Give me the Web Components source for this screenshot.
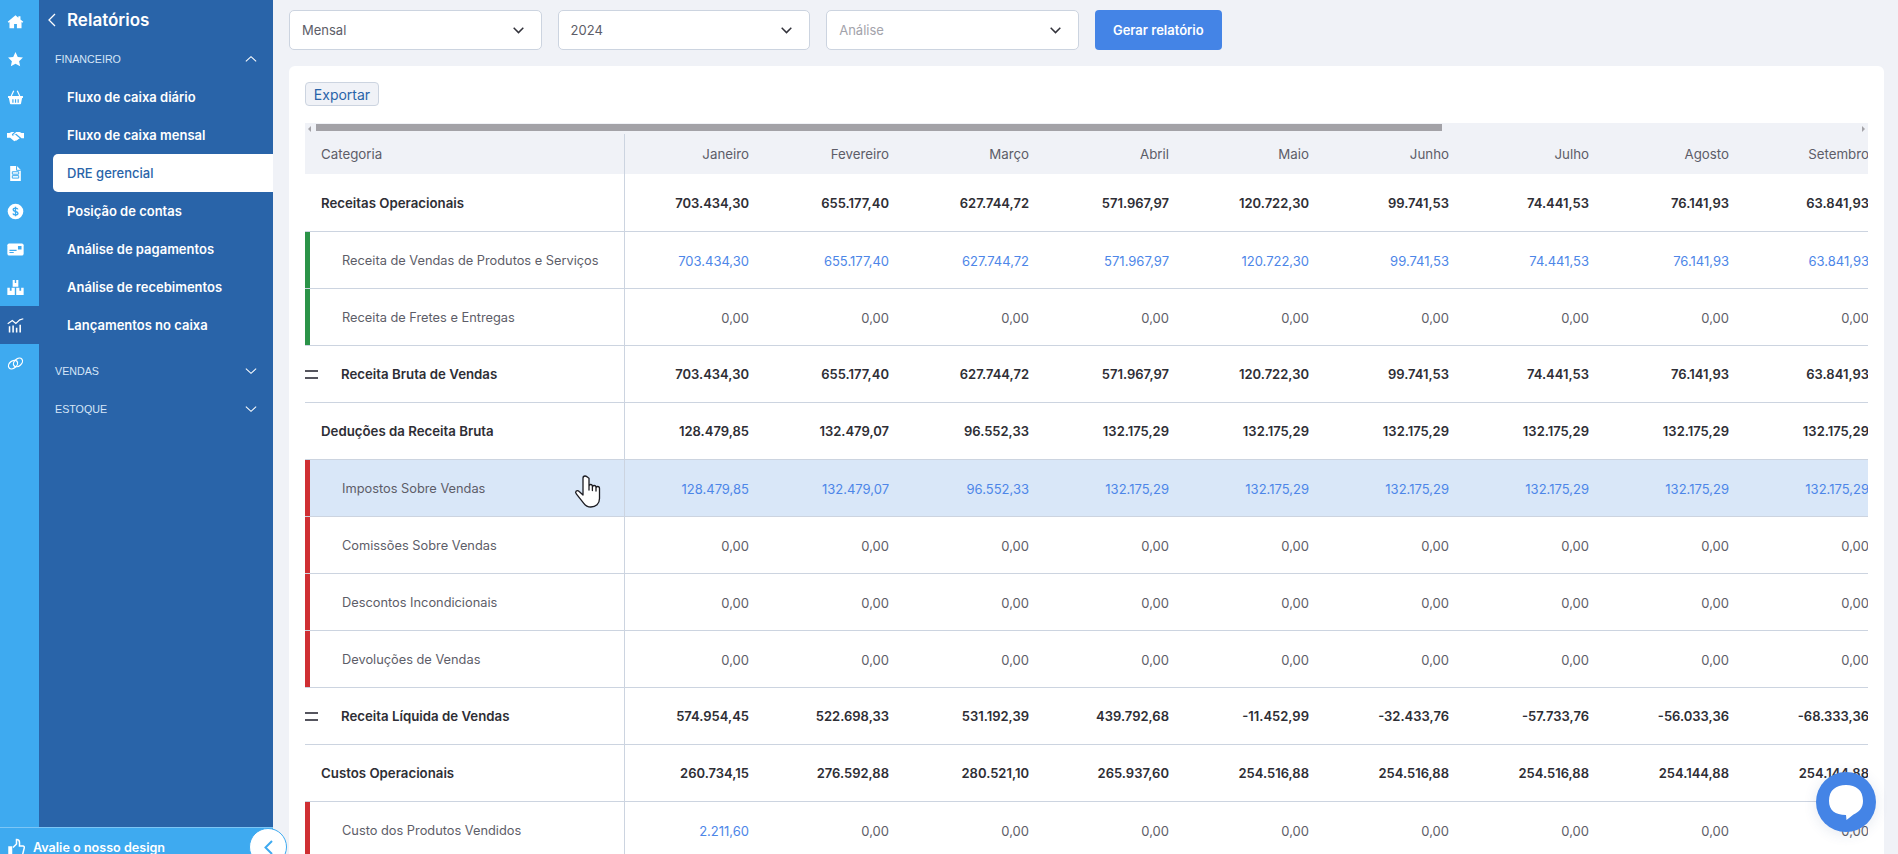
<!DOCTYPE html>
<html lang="pt-BR">
<head>
<meta charset="utf-8">
<title>DRE gerencial</title>
<style>
  html, body { margin: 0; height: 100%; overflow: hidden; }
  body { display: flex; height: 854px; background: #f0f2f7; font-family: Inter, "Liberation Sans", sans-serif; }
</style>
</head>
<body>
<nav-panel></nav-panel>
<main-area></main-area>
<hand-cursor></hand-cursor>
<chat-button></chat-button>

<script>
const ICONS = {
  home: '<path d="M12 3 1 12.400l1.300 1.400L3.500 12.800V21.500H10V15.500h4v6h6.500V12.800l1.200 1 1.300-1.400L19 9.200V4.500h-3v2.200z"/>',
  star: '<path d="m12 1.500 3.200 6.800 7.300.9-5.400 5.100 1.500 7.400L12 18.100l-6.600 3.600 1.500-7.400-5.400-5.100 7.300-.9z"/>',
  basket: '<path d="M1.500 10h21v2.800h-1.200l-1.500 7.800c-.1.600-.6 1-1.200 1H5.400c-.6 0-1.100-.4-1.200-1L2.700 12.800H1.500z"/><path d="m6 10 3.500-7.500M18 10l-3.500-7.500" stroke="#fff" stroke-width="1.700" fill="none"/><path d="M7.500 14.500h1.700v5H7.500zm3.700 0h1.700v5h-1.700zm3.700 0h1.700v5h-1.700z" fill="#3eaaf0"/>',
  hands: '<path d="M0 8.500h3.500l3-1.500h4l-3.300 3c-.9 1 .3 2.800 1.800 2l2.500-1.500 6.300 5.500-1 1.300-1.200-.3-.3 1.300-1.300-.3-.5 1.300-1.500-.2-1 .9-2-1-4.500-3.800H0z"/><path d="M24 8.500h-3.500l-2.500-1.500h-5l-4 3.700c-.3.700.5 1 1 .7l3-1.900 7.500 6.500H24z"/>',
  doc: '<path d="M4.500 1.500H14l5.500 5.500v15.500h-15z"/><path d="M7.500 9.500h9V13h-9zm0 5.500h9v3.500h-9zM13.500 1.500v6h6" fill="none" stroke="#3eaaf0" stroke-width="1.400"/>',
  money: '<circle cx="12" cy="12" r="11"/><path d="M15.500 9c-.5-1.300-1.800-1.800-3.500-1.800-2 0-3.300 1-3.300 2.400 0 3.400 6.800 1.500 6.800 4.800 0 1.400-1.400 2.400-3.500 2.400-1.800 0-3.200-.6-3.700-2M12 5.200v13.600" fill="none" stroke="#3eaaf0" stroke-width="1.900"/>',
  card: '<rect x="0.500" y="3.500" width="23" height="17" rx="2.500"/><path d="M3.500 12.500h10v1.600h-10zm0 3h6v1.600h-6zm12-8.500h5v5h-5z" fill="#3eaaf0"/>',
  boxes: '<path d="M8 1.500h3v4h2v-4h3v9.500H8zM.500 12.500h3.500v4h2.500v-4H11v10H.500zm12.500 0h4.500v4h2.500v-4h3.500v10H13z"/>',
  chart: '<path d="M2.500 13h2.200v9H2.500zm5-1h2.200v10H7.500zm5 3h2.200v7h-2.200zm5-4h2.200v11h-2.200z"/><path d="m1 9.500 6.500-4.500 5 4 5.500-5 5-1.500" fill="none" stroke="#fff" stroke-width="1.700"/>',
  link: '<g fill="none" stroke="#fff" stroke-width="1.800"><ellipse cx="8.500" cy="13.500" rx="7.200" ry="5" transform="rotate(-40 8.500 13.500)"/><ellipse cx="15.500" cy="10.500" rx="7.200" ry="5" transform="rotate(-40 15.500 10.500)"/></g>'
};

class RailButton extends HTMLElement {
  connectedCallback() {
    const name = this.getAttribute('icon');
    this.attachShadow({ mode: 'open' }).innerHTML = `
      <style>
        :host { display: flex; height: 38px; align-items: center; justify-content: center; padding-right: 9px; }
        :host([active]) { background: #2964a9; }
        svg { width: 17px; height: 17px; fill: #fff; display: block; }
      </style>
      <svg viewBox="0 0 24 24">${ICONS[name]}</svg>
    `;
  }
}
customElements.define('rail-button', RailButton);

class MenuGroup extends HTMLElement {
  connectedCallback() {
    const open = this.hasAttribute('open');
    const arrow = open ? 'M1 7l6-5.500L13 7' : 'M1 1.500 7 7l6-5.500';
    this.attachShadow({ mode: 'open' }).innerHTML = `
      <style>
        :host { display: block; margin-bottom: 8px; }
        :host([open]) { margin-bottom: 8px; }
        .title { display: flex; align-items: center; justify-content: space-between; height: 38px; padding: 0 16px;
          font: 10.700px "Liberation Sans", Arial, sans-serif; color: #d6e6f8; }
        svg { width: 12px; height: 8px; fill: none; stroke: #fff; stroke-width: 1.200; }
      </style>
      <div class="title"><span>${this.getAttribute('label')}</span><svg viewBox="0 0 14 8.500"><path d="${arrow}"/></svg></div>
      <slot></slot>
    `;
  }
}
customElements.define('menu-group', MenuGroup);

class MenuItem extends HTMLElement {
  connectedCallback() {
    this.attachShadow({ mode: 'open' }).innerHTML = `
      <style>
        :host { display: flex; align-items: center; height: 38px; margin-left: 14px; padding-left: 14px;
          font: 600 13px Inter, sans-serif; color: #fff; border-radius: 5px 0 0 5px; }
        :host([active]) { background: #fff; color: #2964a9; font-weight: 500; }
      </style>
      <slot></slot>
    `;
  }
}
customElements.define('menu-item', MenuItem);

class NavPanel extends HTMLElement {
  connectedCallback() {
    const rail = Object.keys(ICONS).map(n => `<rail-button icon="${n}"${n === 'chart' ? ' active' : ''}></rail-button>`).join('');
    this.attachShadow({ mode: 'open' }).innerHTML = `
      <style>
        :host { display: flex; flex-direction: column; flex: none; width: 273px; height: 854px; position: relative; z-index: 2; }
        .top { display: flex; flex: none; height: 827px; }
        .rail { width: 39px; flex: none; background: #3eaaf0; padding-top: 2px; box-sizing: border-box; }
        .menu { flex: 1; background: #2964a9; padding-top: 2px; }
        .back { display: flex; align-items: center; height: 36px; gap: 11px; padding-left: 9px;
          font: 600 17px Inter, sans-serif; color: #fff; }
        .back svg { width: 8px; height: 14px; fill: none; stroke: #fff; stroke-width: 1.300; }
        .groups { padding-top: 2px; }
        .bottom { height: 27px; overflow: hidden; box-sizing: border-box; border-top: 1px solid #7cc6f6; background: #3eaaf0; display: flex;
          gap: 8px; padding: 10px 0 0 8px; font: 600 12.600px Inter, sans-serif; color: #fff; }
        .bottom svg { width: 17px; height: 20px; fill: none; stroke: #fff; stroke-width: 1.500; flex: none; }
        .bottom span { line-height: 20px; }
        .fold { position: absolute; left: 249px; top: 828px; width: 38px; height: 38px; box-sizing: border-box; border-radius: 50%; background: #fff;
          border: 1.500px solid #3eaaf0; display: flex; align-items: center; justify-content: center; }
        .fold svg { width: 9px; height: 15px; fill: none; stroke: #3eaaf0; stroke-width: 2; }
      </style>
      <div class="top">
        <div class="rail">${rail}</div>
        <div class="menu">
          <div class="back"><svg viewBox="0 0 8 14"><path d="M7 1 1 7l6 6"/></svg>Relatórios</div>
          <div class="groups">
            <menu-group label="FINANCEIRO" open>
              <menu-item>Fluxo de caixa diário</menu-item>
              <menu-item>Fluxo de caixa mensal</menu-item>
              <menu-item active>DRE gerencial</menu-item>
              <menu-item>Posição de contas</menu-item>
              <menu-item>Análise de pagamentos</menu-item>
              <menu-item>Análise de recebimentos</menu-item>
              <menu-item>Lançamentos no caixa</menu-item>
            </menu-group>
            <menu-group label="VENDAS" style="margin-bottom:0"></menu-group>
            <menu-group label="ESTOQUE"></menu-group>
          </div>
        </div>
      </div>
      <div class="bottom">
        <svg viewBox="0 0 17 20"><path d="M1 9h2.500v10H1z" fill="#fff"/><path d="M5 9.500 8.500 6V1.500c1.800 0 3 1 3 3V8H15c1 0 1.500 1 1.300 1.800L14.500 17c-.2.800-.8 1.200-1.500 1.200H7.500L5 17"/></svg>
        <span>Avalie o nosso design</span>
      </div>
      <div class="fold"><svg viewBox="0 0 9 15"><path d="M8 1 1.500 7.500 8 14"/></svg></div>
    `;
  }
}
customElements.define('nav-panel', NavPanel);

class FilterSelect extends HTMLElement {
  connectedCallback() {
    this.attachShadow({ mode: 'open' }).innerHTML = `
      <style>
        :host { display: flex; align-items: center; justify-content: space-between; width: 252.600px; height: 40px; box-sizing: border-box;
          padding: 0 17px 0 12px; background: #fff; border: 1px solid #ccd4e0; border-radius: 5px;
          font: 13px Inter, sans-serif; color: #5d5d68; }
        :host([placeholder]) { color: #a3a3ab; }
        svg { width: 11px; height: 7px; fill: none; stroke: #33333b; stroke-width: 1.500; }
      </style>
      <slot></slot>
      <svg viewBox="0 0 11 7"><path d="m.7.8 4.800 4.800L10.300.8"/></svg>
    `;
  }
}
customElements.define('filter-select', FilterSelect);

const MONTHS = ['Janeiro', 'Fevereiro', 'Março', 'Abril', 'Maio', 'Junho', 'Julho', 'Agosto', 'Setembro'];
const ZEROS = Array(9).fill('0,00');
const RECEITA = ['703.434,30', '655.177,40', '627.744,72', '571.967,97', '120.722,30', '99.741,53', '74.441,53', '76.141,93', '63.841,93'];
const DEDUCOES = ['128.479,85', '132.479,07', '96.552,33', '132.175,29', '132.175,29', '132.175,29', '132.175,29', '132.175,29', '132.175,29'];
const ROWS = [
  { label: 'Receitas Operacionais', kind: 'group', values: RECEITA },
  { label: 'Receita de Vendas de Produtos e Serviços', bar: 'green', values: RECEITA, link: true },
  { label: 'Receita de Fretes e Entregas', bar: 'green', values: ZEROS },
  { label: 'Receita Bruta de Vendas', kind: 'total', values: RECEITA },
  { label: 'Deduções da Receita Bruta', kind: 'group', values: DEDUCOES },
  { label: 'Impostos Sobre Vendas', bar: 'red', values: DEDUCOES, link: true, hover: true },
  { label: 'Comissões Sobre Vendas', bar: 'red', values: ZEROS },
  { label: 'Descontos Incondicionais', bar: 'red', values: ZEROS },
  { label: 'Devoluções de Vendas', bar: 'red', values: ZEROS },
  { label: 'Receita Líquida de Vendas', kind: 'total', values: ['574.954,45', '522.698,33', '531.192,39', '439.792,68', '-11.452,99', '-32.433,76', '-57.733,76', '-56.033,36', '-68.333,36'] },
  { label: 'Custos Operacionais', kind: 'group', values: ['260.734,15', '276.592,88', '280.521,10', '265.937,60', '254.516,88', '254.516,88', '254.516,88', '254.144,88', '254.144,88'] },
  { label: 'Custo dos Produtos Vendidos', bar: 'red', values: ['2.211,60', ...ZEROS.slice(1)], firstLink: true }
];

class ReportTable extends HTMLElement {
  connectedCallback() {
    const head = MONTHS.map(m => `<div class="num">${m}</div>`).join('');
    const body = ROWS.map(r => {
      const cls = ['row', r.kind === 'group' || r.kind === 'total' ? 'strong' : 'sub', r.hover ? 'hover' : ''].join(' ');
      const cat = r.kind === 'total' ? 'total' : r.bar ? 'bar ' + r.bar : 'plain';
      const eq = r.kind === 'total' ? '<i class="eq"></i>' : '';
      const nums = r.values.map((v, i) => `<div class="num${r.link || (r.firstLink && i === 0) ? ' link' : ''}">${v}</div>`).join('');
      return `<div class="${cls}"><div class="cat ${cat}">${eq}<span>${r.label}</span></div>${nums}</div>`;
    }).join('');
    this.attachShadow({ mode: 'open' }).innerHTML = `
      <style>
        :host { display: block; overflow: hidden; font: 13px Inter, sans-serif; color: #5d5d68; }
        .scroll { height: 11px; background: #f0f2f7; display: flex; align-items: center; }
        .scroll .left, .scroll .right { width: 0; height: 0; border: 3px solid transparent; }
        .scroll .left { border-left: 0; border-right-color: #a3a2a7; margin-left: 3px; }
        .scroll .right { border-right: 0; border-left-color: #a3a2a7; margin-left: auto; margin-right: 3px; }
        .scroll .thumb { width: 1126px; height: 7px; margin: 0 0 2px 5px; background: #a3a2a7; }
        .row { display: grid; grid-template-columns: 320px repeat(9, 140px); }
        .head { height: 40px; background: #f0f2f7; font-size: 13.300px; }
        .cat { display: flex; align-items: center; box-sizing: border-box; border-right: 1px solid #ccd4e0; padding-left: 16px; }
        .num { display: flex; align-items: center; justify-content: flex-end; padding-right: 16px; white-space: nowrap; }
        .body .row { height: 57px; box-sizing: border-box; border-bottom: 1px solid #ccd4e0; }
        .body .row:first-child { height: 58px; }
        .strong { font-weight: 600; color: #2e2e35; }
        .strong .cat { font-size: 13.250px; }
        .sub .cat { font-size: 12.800px; }
        .sub .num { color: #5d5d68; padding-top: 1px; }
        .sub .num.link { color: #4d86e8; }
        .bar { border-left: 5px solid; padding-left: 32px; }
        .bar.green { border-left-color: #2b9348; }
        .bar.red { border-left-color: #cf2f33; }
        .total { padding-left: 0; gap: 23px; }
        .eq { width: 13px; height: 5px; border-top: 2px solid #55555e; border-bottom: 2px solid #55555e; display: block; flex: none; }
        .hover { background: #d9e7f8; }
      </style>
      <div class="scroll"><div class="left"></div><div class="thumb"></div><div class="right"></div></div>
      <div class="row head"><div class="cat">Categoria</div>${head}</div>
      <div class="body">${body}</div>
    `;
  }
}
customElements.define('report-table', ReportTable);

class MainArea extends HTMLElement {
  connectedCallback() {
    this.attachShadow({ mode: 'open' }).innerHTML = `
      <style>
        :host { display: flex; flex-direction: column; flex: 1; min-width: 0; height: 854px; box-sizing: border-box; padding: 10px 14px 0 16px; }
        .filters { display: flex; gap: 16px; flex: none; }
        button { width: 127px; height: 40px; border: 0; border-radius: 4px; background: #4484e6; color: #fff; font: 600 13px Inter, sans-serif; }
        .card { flex: 1; min-height: 0; margin-top: 16px; padding: 16px 16px 0; background: #fff; border-radius: 6px 6px 0 0; display: flex; flex-direction: column; }
        .export { align-self: flex-start; height: 24px; width: 74px; box-sizing: border-box; border: 1px solid #ccd4e0; border-radius: 4px; background: #f0f2f7;
          color: #2964a9; font: 14px Inter, sans-serif; padding: 0; margin-bottom: 17px; }
        report-table { flex: 1; min-height: 0; }
      </style>
      <div class="filters">
        <filter-select>Mensal</filter-select>
        <filter-select>2024</filter-select>
        <filter-select placeholder>Análise</filter-select>
        <button>Gerar relatório</button>
      </div>
      <div class="card">
        <button class="export">Exportar</button>
        <report-table></report-table>
      </div>
    `;
  }
}
customElements.define('main-area', MainArea);

class HandCursor extends HTMLElement {
  connectedCallback() {
    this.attachShadow({ mode: 'open' }).innerHTML = `
      <style>
        :host { position: absolute; left: 574px; top: 474px; width: 27px; height: 34px; }
        svg { width: 100%; height: 100%; fill: #fff; stroke: #1c1c22; stroke-width: 1.300; stroke-linejoin: round; }
      </style>
      <svg viewBox="0 0 27 34"><path d="M11 2c-1.500 0-2 1-2 2.200V21l-3.800-3.500c-1-1-2.400-1-3.200-.2-.6.7-.4 1.700.3 2.500l7.500 9.500c1.800 2.500 4 3.700 7 3.700 5 0 8.700-3.300 8.700-8.500V14.500c0-1.300-.8-2-1.800-2s-1.700.7-1.700 2V17v-3.500c0-1.300-.8-2-1.800-2s-1.800.7-1.800 2v3-4c0-1.300-.7-2-1.700-2s-1.700.7-1.700 2v3.500V4.200C13 3 12.500 2 11 2z"/></svg>
    `;
  }
}
customElements.define('hand-cursor', HandCursor);

class ChatButton extends HTMLElement {
  connectedCallback() {
    this.attachShadow({ mode: 'open' }).innerHTML = `
      <style>
        :host { position: absolute; left: 1816px; top: 772px; width: 60px; height: 60px; border-radius: 50%; background: #4484e6;
          box-shadow: 0 2px 14px rgba(40, 70, 130, .12); display: flex; align-items: center; justify-content: center; }
        svg { width: 36px; height: 36px; fill: #fff; }
      </style>
      <svg viewBox="0 0 36 36"><path d="M18 1C8 1 1 6 1 17c0 9 6 14 17 14l.5 5 7-5.500C31 28 35 24 35 17 35 6 28 1 18 1z"/></svg>
    `;
  }
}
customElements.define('chat-button', ChatButton);
</script>
</body>
</html>
